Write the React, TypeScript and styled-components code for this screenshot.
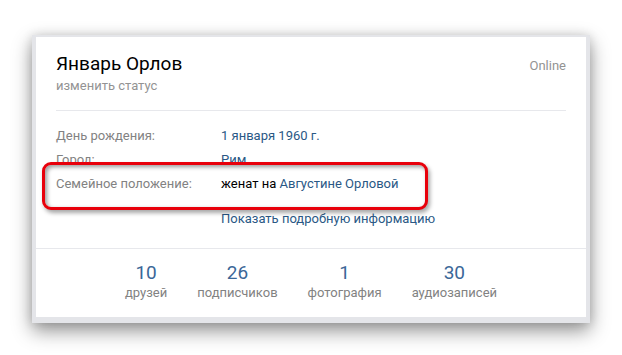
import React from "react";
import styled, { createGlobalStyle } from "styled-components";

const Global = createGlobalStyle`
  html, body { margin: 0; padding: 0; background: #ffffff; }
  body { font-family: Roboto, "Noto Sans", Arial, sans-serif; -webkit-font-smoothing: antialiased; }
`;

const Page = styled.div`
  width: 622px;
  height: 355px;
  box-sizing: border-box;
  padding: 35px 32px 0 32px;
  background: #ffffff;
`;

const Frame = styled.div`
  width: 558px;
  box-sizing: border-box;
  padding: 2px 4px 6px 4px;
  background: #e4e5e9;
  box-shadow: 0 8px 18px rgba(0, 0, 0, 0.42), 0 0 10px rgba(0, 0, 0, 0.12);
`;

const Card = styled.div`
  position: relative;
  width: 550px;
  height: 280px;
  background: #ffffff;
  display: flex;
  flex-direction: column;
`;

const Head = styled.div`
  padding: 15px 20px 0 20px;
`;

const NameRow = styled.div`
  display: flex;
  align-items: baseline;
  justify-content: space-between;
`;

const Name = styled.div`
  font-size: 19px;
  line-height: 23px;
  color: #000000;
`;

const Online = styled.div`
  font-size: 13px;
  line-height: 16px;
  color: #939393;
`;

const Status = styled.div`
  margin-top: 3px;
  font-size: 13px;
  line-height: 16px;
  color: #939393;
`;

const Divider = styled.div<{ $inset?: boolean }>`
  height: 1px;
  background: #e7e8ec;
  margin: ${(p) => (p.$inset ? "16px 20px 0 20px" : "0")};
`;

const Info = styled.div`
  padding: 13px 20px 21px 20px;
  display: flex;
  flex-direction: column;
`;

const Row = styled.div<{ $front?: boolean }>`
  display: flex;
  font-size: 13px;
  line-height: 16px;
  padding: 4px 0;
  position: ${(p) => (p.$front ? "relative" : "static")};
  z-index: ${(p) => (p.$front ? 2 : "auto")};
`;

const Label = styled.div`
  width: 165px;
  flex: none;
  color: #828282;
`;

const Value = styled.div<{ $dark?: boolean }>`
  color: ${(p) => (p.$dark ? "#000000" : "#2a5885")};
`;

const Link = styled.span`
  color: #2a5885;
`;

const MoreRow = styled.div`
  padding: 15px 0 0 165px;
  font-size: 13px;
  line-height: 16px;
  color: #2a5885;
`;

const Highlight = styled.div`
  position: absolute;
  left: 6px;
  top: 125px;
  width: 386px;
  height: 48px;
  box-sizing: border-box;
  border: 3px solid #e8000b;
  border-radius: 9px;
  background: #ffffff;
  z-index: 1;
  box-shadow: 2px 3px 4px rgba(0, 0, 0, 0.35), inset 2px 2px 4px rgba(0, 0, 0, 0.4);
`;

const Counters = styled.div`
  display: flex;
  justify-content: center;
  gap: 30px;
  padding: 13px 0 16px 0;
`;

const Counter = styled.div`
  display: flex;
  flex-direction: column;
  align-items: center;
`;

const Count = styled.div`
  font-size: 19px;
  line-height: 24px;
  color: #3b6798;
`;

const CountLabel = styled.div`
  font-size: 13px;
  line-height: 16px;
  color: #828282;
`;

const counters = [
  { n: "10", l: "друзей" },
  { n: "26", l: "подписчиков" },
  { n: "1", l: "фотография" },
  { n: "30", l: "аудиозаписей" },
];

export default function App() {
  return (
    <>
      <Global />
      <Page>
        <Frame>
          <Card>
            <Highlight />
            <Head>
              <NameRow>
                <Name>Январь Орлов</Name>
                <Online>Online</Online>
              </NameRow>
              <Status>изменить статус</Status>
            </Head>
            <Divider $inset />
            <Info>
              <Row>
                <Label>День рождения:</Label>
                <Value>1 января 1960 г.</Value>
              </Row>
              <Row>
                <Label>Город:</Label>
                <Value>Рим</Value>
              </Row>
              <Row $front>
                <Label>Семейное положение:</Label>
                <Value $dark>
                  женат на <Link>Августине Орловой</Link>
                </Value>
              </Row>
              <MoreRow>Показать подробную информацию</MoreRow>
            </Info>
            <Divider />
            <Counters>
              {counters.map((c) => (
                <Counter key={c.l}>
                  <Count>{c.n}</Count>
                  <CountLabel>{c.l}</CountLabel>
                </Counter>
              ))}
            </Counters>
          </Card>
        </Frame>
      </Page>
    </>
  );
}
